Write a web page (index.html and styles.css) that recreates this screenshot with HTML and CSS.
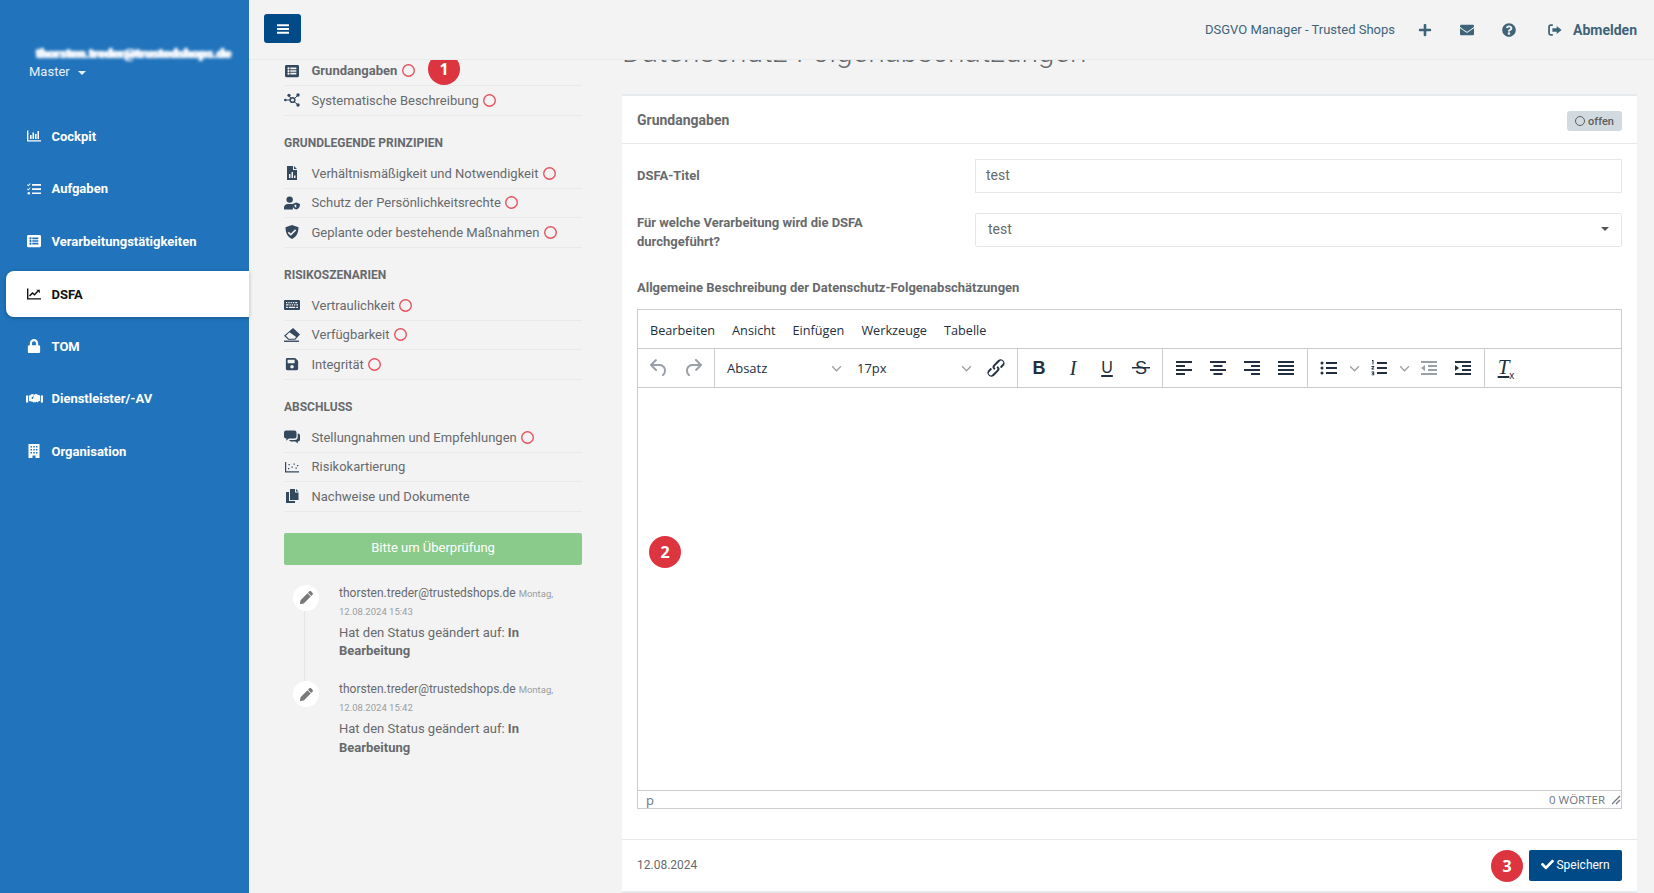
FILE: index.html
```html
<!DOCTYPE html>
<html lang="de">
<head>
  <meta charset="UTF-8" />
  <meta name="viewport" content="width=device-width,initial-scale=1.0" />
  <title>DSFA - Grundangaben</title>
  <link rel="stylesheet" href="styles.css">
</head>
<body>
  <svg class="sprite" aria-hidden="true">
    <symbol id="i-bars" viewBox="0 0 14 14"><path d="M1 2.2h12v2H1zM1 6h12v2H1zM1 9.8h12v2H1z"/></symbol>
    <symbol id="i-chartbar" viewBox="0 0 14 14"><path d="M0 1.5h1.4v9.700H14v1.400H0zM3 6h1.600v4H3zM5.500 3.500h1.600V10H5.500zM8 5h1.600v5H8zM10.500 2H12v8h-1.500z"/></symbol>
    <symbol id="i-tasks" viewBox="0 0 14 14"><path d="M5 2h9v1.700H5zM5 6.200h9v1.700H5zM5 10.400h9v1.700H5zM.5 2.200l.8.800L3 1.200l.7.700L1.300 4.300 0 3zM.5 6.400l.8.800L3 5.400l.7.700-2.400 2.400L0 7.200z"/><circle cx="1.800" cy="11.300" r="1.300"/></symbol>
    <symbol id="i-list" viewBox="0 0 512 512"><path d="M464 480H48c-26.510 0-48-21.490-48-48V80c0-26.510 21.490-48 48-48h416c26.510 0 48 21.490 48 48v352c0 26.510-21.490 48-48 48zM128 120c-22.091 0-40 17.909-40 40s17.909 40 40 40 40-17.909 40-40-17.909-40-40-40zm0 96c-22.091 0-40 17.909-40 40s17.909 40 40 40 40-17.909 40-40-17.909-40-40-40zm0 96c-22.091 0-40 17.909-40 40s17.909 40 40 40 40-17.909 40-40-17.909-40-40-40zm288-136v-32c0-6.627-5.373-12-12-12H204c-6.627 0-12 5.373-12 12v32c0 6.627 5.373 12 12 12h200c6.627 0 12-5.373 12-12zm0 96v-32c0-6.627-5.373-12-12-12H204c-6.627 0-12 5.373-12 12v32c0 6.627 5.373 12 12 12h200c6.627 0 12-5.373 12-12zm0 96v-32c0-6.627-5.373-12-12-12H204c-6.627 0-12 5.373-12 12v32c0 6.627 5.373 12 12 12h200c6.627 0 12-5.373 12-12z"/></symbol>
    <symbol id="i-chartline" viewBox="0 0 14 14"><path d="M0 1.500h1.400v9.700H14v1.400H0z"/><path d="M2.500 9l3-3 2 1.800 3.300-3.500" fill="none" stroke="currentColor" stroke-width="1.500"/><path d="M9.300 2.800h3.500v3.500z"/></symbol>
    <symbol id="i-lock" viewBox="0 0 448 512"><path d="M400 224h-24v-72C376 68.200 307.800 0 224 0S72 68.200 72 152v72H48c-26.500 0-48 21.500-48 48v192c0 26.500 21.500 48 48 48h352c26.500 0 48-21.500 48-48V272c0-26.500-21.500-48-48-48zm-104 0H152v-72c0-39.700 32.300-72 72-72s72 32.300 72 72v72z"/></symbol>
    <symbol id="i-hands" viewBox="0 0 17 14"><path d="M0 3.500h2.200v7H0zM14.800 3.500H17v7h-2.200zM3 3.700l3-1.700 2.500.8-2.900 2.900c-.5.700.5 1.700 1.300 1.100l1.600-1.300 4 3.700-1.200 1.300-1-.9-.5 1-1-.8-.8 1-1.300-1L3 9zM8.300 2.500L10 2l4 1.500v5.300l-1.700.6-4.100-3.800-1.300 1z"/></symbol>
    <symbol id="i-building" viewBox="0 0 12 14"><path fill-rule="evenodd" d="M.5 0h11v14H7.500v-2.500h-3V14h-4zM2.500 2v1.500H4V2zm2.800 0v1.500h1.500V2zM8 2v1.500h1.500V2zM2.500 5v1.500H4V5zm2.800 0v1.500h1.500V5zM8 5v1.500h1.500V5zM2.500 8v1.500H4V8zm2.800 0v1.500h1.500V8zM8 8v1.500h1.500V8z"/></symbol>
    <symbol id="i-nodes" viewBox="0 0 16 14"><path d="M1.500 7h5M5 3l2.500 3M10 6l3.500-3.500M10 8.500l3.500 3" fill="none" stroke="currentColor" stroke-width="1"/><circle cx="1.300" cy="7" r="1.300"/><circle cx="5" cy="2.300" r="1.600"/><circle cx="14" cy="2" r="1.700"/><circle cx="14" cy="12" r="1.700"/><circle cx="8.500" cy="7" r="2.300" fill="none" stroke="currentColor" stroke-width="1.600"/></symbol>
    <symbol id="i-filechart" viewBox="0 0 12 14"><path fill-rule="evenodd" d="M1 0h6v4h4v10H1zM8 0l3 3H8zM3 8v4h1.500V8zm2.500-2v6H7V6zM8 9.500V12h1.500V9.500z"/></symbol>
    <symbol id="i-usershield" viewBox="0 0 17 14"><circle cx="6" cy="3.400" r="3.400"/><path d="M0 14v-2.200C0 9.500 2 8 4 8h4c.6 0 1 .1 1.500.3V14z"/><path fill-rule="evenodd" d="M13 6.500l4 1.500c0 3-1 5-4 6-3-1-4-3-4-6zm0 2l-2 .7c.1 1.500.7 2.400 2 3z"/></symbol>
    <symbol id="i-shield" viewBox="0 0 14 14"><path fill-rule="evenodd" d="M7 0l6.500 2.300c0 5.500-1.900 9.700-6.500 11.700C2.400 12 .5 7.800.5 2.300zM3.800 6.800L2.800 7.900l3 2.800 5.400-5.300-1.100-1.100-4.300 4.200z"/></symbol>
    <symbol id="i-keyboard" viewBox="0 0 16 12"><path fill-rule="evenodd" d="M1 1h14a1 1 0 0 1 1 1v8a1 1 0 0 1-1 1H1a1 1 0 0 1-1-1V2a1 1 0 0 1 1-1zm1 2v1.300h1.300V3zm2.300 0v1.300h1.300V3zm2.300 0v1.300h1.300V3zm2.300 0v1.300h1.300V3zm2.300 0v1.300h2V3zM2 5.300v1.300h2.500V5.300zm3.500 0v1.300h1.300V5.300zm2.300 0v1.300h1.300V5.300zm2.300 0v1.300h1.300V5.300zm2.300 0v1.300H14V5.300zM2 7.700V9h1.800V7.700zm2.800 0V9h6.400V7.700zm7.400 0V9H14V7.700z"/></symbol>
    <symbol id="i-eraser" viewBox="0 0 15 13"><path fill-rule="evenodd" d="M8.500 0l6.500 6-4.500 5H4L0 7.300zM5.200 4L1.700 7.300 4.600 10h5.300l1.500-1.600z"/><path d="M0 11.700h14V13H0z"/></symbol>
    <symbol id="i-save" viewBox="0 0 448 512"><path d="M433.941 129.941l-83.882-83.882A48 48 0 0 0 316.118 32H48C21.490 32 0 53.490 0 80v352c0 26.510 21.490 48 48 48h352c26.510 0 48-21.490 48-48V163.882a48 48 0 0 0-14.059-33.941zM224 416c-35.346 0-64-28.654-64-64 0-35.346 28.654-64 64-64s64 28.654 64 64c0 35.346-28.654 64-64 64zm96-304.520V212c0 6.627-5.373 12-12 12H76c-6.627 0-12-5.373-12-12V108c0-6.627 5.373-12 12-12h228.520c3.183 0 6.235 1.264 8.485 3.515l3.480 3.480A11.996 11.996 0 0 1 320 111.480z"/></symbol>
    <symbol id="i-comments" viewBox="0 0 16 14"><path d="M2 .5h8.500a2 2 0 0 1 2 2v4a2 2 0 0 1-2 2H5l-3 2.300.6-2.300H2a2 2 0 0 1-2-2v-4a2 2 0 0 1 2-2z"/><path d="M13.700 3.500H14a2 2 0 0 1 2 2v4a2 2 0 0 1-2 2h-.4l.6 2-3-2H7a2 2 0 0 1-1.800-1.500h5.300a3.200 3.200 0 0 0 3.200-3.200z"/></symbol>
    <symbol id="i-scatter" viewBox="0 0 14 14"><path d="M0 2h1.200v9.300H14v1.200H0z"/><path d="M3 8h1.300v1.300H3zM3.500 4h1.300v1.300H3.500zM6.500 6.500h1.300v1.300H6.500zM8.500 3.500h1.300v1.300H8.500zM10.500 7.500h1.300v1.300h-1.300zM12 5h1.300v1.300H12z"/></symbol>
    <symbol id="i-copy" viewBox="0 0 14 14"><path d="M5 0h5v3.500h3.500V11H5z"/><path d="M11 0l2.500 2.500H11zM1 3h3v9h6v2H1z"/></symbol>
    <symbol id="i-pencil" viewBox="0 0 512 512"><path d="M497.900 142.100l-46.100 46.100c-4.700 4.700-12.300 4.700-17 0l-111-111c-4.700-4.700-4.700-12.300 0-17l46.100-46.100c18.700-18.700 49.100-18.700 67.900 0l60.100 60.100c18.800 18.700 18.800 49.100 0 67.900zM284.200 99.800L21.600 362.400.4 483.900c-2.900 16.400 11.400 30.600 27.800 27.800l121.500-21.300 262.600-262.600c4.700-4.700 4.700-12.300 0-17l-111-111c-4.800-4.700-12.400-4.700-17.100 0z"/></symbol>
    <symbol id="i-check" viewBox="0 0 512 512"><path d="M173.898 439.404l-166.400-166.400c-9.997-9.997-9.997-26.206 0-36.204l36.203-36.204c9.997-9.998 26.207-9.998 36.204 0L192 312.690 432.095 72.596c9.997-9.997 26.207-9.997 36.204 0l36.203 36.204c9.997 9.997 9.997 26.206 0 36.204l-294.400 294.401c-9.998 9.997-26.207 9.997-36.204-.001z"/></symbol>
    <symbol id="i-plus" viewBox="0 0 448 512"><path d="M416 208H272V64c0-17.670-14.330-32-32-32h-32c-17.670 0-32 14.330-32 32v144H32c-17.670 0-32 14.330-32 32v32c0 17.670 14.330 32 32 32h144v144c0 17.670 14.330 32 32 32h32c17.670 0 32-14.330 32-32V304h144c17.670 0 32-14.330 32-32v-32c0-17.670-14.330-32-32-32z"/></symbol>
    <symbol id="i-envelope" viewBox="0 0 512 512"><path d="M502.300 190.800c3.900-3.100 9.700-.2 9.700 4.700V400c0 26.500-21.500 48-48 48H48c-26.500 0-48-21.500-48-48V195.600c0-5 5.700-7.800 9.700-4.700 22.400 17.400 52.100 39.500 154.100 113.600 21.100 15.400 56.700 47.800 92.200 47.600 35.700.3 72-32.800 92.300-47.600 102-74.100 131.600-96.300 154-113.700zM256 320c23.200.4 56.600-29.200 73.400-41.400 132.700-96.300 142.800-104.700 173.400-128.700 5.800-4.500 9.200-11.500 9.200-18.900v-19c0-26.500-21.500-48-48-48H48C21.500 64 0 85.500 0 112v19c0 7.400 3.400 14.300 9.200 18.900 30.600 23.900 40.700 32.400 173.400 128.700 16.800 12.200 50.200 41.800 73.400 41.400z"/></symbol>
    <symbol id="i-question" viewBox="0 0 512 512"><path d="M504 256c0 136.997-111.043 248-248 248S8 392.997 8 256C8 119.083 119.043 8 256 8s248 111.083 248 248zM262.655 90c-54.497 0-89.255 22.957-116.549 63.758-3.536 5.286-2.353 12.415 2.715 16.258l34.699 26.310c5.205 3.947 12.621 3.008 16.665-2.122 17.864-22.658 30.113-35.797 57.303-35.797 20.429 0 45.698 13.148 45.698 32.958 0 14.976-12.363 22.667-32.534 33.976C247.128 238.528 216 254.941 216 296v4c0 6.627 5.373 12 12 12h56c6.627 0 12-5.373 12-12v-1.333c0-28.462 83.186-29.647 83.186-106.667 0-58.002-60.165-102-116.531-102zM256 338c-25.365 0-46 20.635-46 46 0 25.364 20.635 46 46 46s46-20.636 46-46c0-25.365-20.635-46-46-46z"/></symbol>
    <symbol id="i-signout" viewBox="0 0 16 14"><path d="M5.500 1.500H3A1.800 1.800 0 0 0 1.200 3.300v7.400A1.800 1.800 0 0 0 3 12.500h2.500" fill="none" stroke="currentColor" stroke-width="2"/><path d="M10 2.300L15.500 7 10 11.700V9H5V5h5z"/></symbol>

    <symbol id="m-undo" viewBox="0 0 24 24"><path d="M6.400 8H12c3.700 0 6.200 2 6.800 5.100.6 2.700-.4 5.600-2.300 6.800a1 1 0 0 1-1-1.800c1.100-.6 1.800-2.700 1.400-4.600-.5-2.100-2.100-3.500-4.900-3.500H6.400l3.300 3.300a1 1 0 1 1-1.400 1.400l-5-5a1 1 0 0 1 0-1.400l5-5a1 1 0 0 1 1.400 1.400L6.400 8z"/></symbol>
    <symbol id="m-redo" viewBox="0 0 24 24"><path d="M17.600 10H12c-2.800 0-4.400 1.400-4.900 3.500-.4 2 .3 4 1.400 4.600a1 1 0 1 1-1 1.800c-2-1.200-2.900-4.100-2.300-6.800.6-3 3-5.100 6.800-5.100h5.600l-3.300-3.300a1 1 0 1 1 1.400-1.400l5 5a1 1 0 0 1 0 1.400l-5 5a1 1 0 0 1-1.400-1.400l3.300-3.300z"/></symbol>
    <symbol id="m-chevron" viewBox="0 0 10 10"><path d="M1 3l4 4 4-4" fill="none" stroke="currentColor" stroke-width="1.200"/></symbol>
    <symbol id="m-link" viewBox="0 0 24 24"><path d="M6.200 12.300a1 1 0 0 1 1.400 1.400l-2 2a2 2 0 1 0 2.800 2.800l4.800-4.800a1 1 0 0 0 0-1.400 1 1 0 1 1 1.400-1.300 2.900 2.900 0 0 1 0 4L9.800 20a4 4 0 0 1-5.600-5.500l2-2.200zm11.600-.6a1 1 0 0 1-1.400-1.400l2-2a2 2 0 1 0-2.800-2.800l-4.800 4.800a1 1 0 0 0 0 1.400 1 1 0 1 1-1.400 1.300 2.900 2.900 0 0 1 0-4L14.200 4a4 4 0 0 1 5.600 5.500l-2 2.200z"/></symbol>
    <symbol id="m-left" viewBox="0 0 24 24"><path d="M4 5h16v2H4zM4 9h9v2H4zM4 13h16v2H4zM4 17h9v2H4z"/></symbol>
    <symbol id="m-center" viewBox="0 0 24 24"><path d="M4 5h16v2H4zM7.500 9h9v2h-9zM4 13h16v2H4zM7.500 17h9v2h-9z"/></symbol>
    <symbol id="m-right" viewBox="0 0 24 24"><path d="M4 5h16v2H4zM11 9h9v2h-9zM4 13h16v2H4zM11 17h9v2h-9z"/></symbol>
    <symbol id="m-justify" viewBox="0 0 24 24"><path d="M4 5h16v2H4zM4 9h16v2H4zM4 13h16v2H4zM4 17h16v2H4z"/></symbol>
    <symbol id="m-bullets" viewBox="0 0 24 24"><path d="M9 6h11v2H9zM9 11h11v2H9zM9 16h11v2H9z"/><circle cx="5" cy="7" r="1.500"/><circle cx="5" cy="12" r="1.500"/><circle cx="5" cy="17" r="1.500"/></symbol>
    <symbol id="m-numbers" viewBox="0 0 24 24"><path d="M10 6h10v2H10zM10 11h10v2H10zM10 16h10v2H10zM5 4h1.500v4.500h-1v-3.300H5zM4.500 10h2.700v1.100l-1.500 1.500h1.500v1H4.500v-1l1.600-1.600H4.500zM4.500 15.500h2.700v3.800H4.500v-.9h1.700v-.6H5v-.8h1.200v-.6H4.500z"/></symbol>
    <symbol id="m-outdent" viewBox="0 0 24 24"><path d="M4 5h16v2H4zM11 9h9v2h-9zM11 13h9v2h-9zM4 17h16v2H4zM8 9v6l-4-3z"/></symbol>
    <symbol id="m-indent" viewBox="0 0 24 24"><path d="M4 5h16v2H4zM11 9h9v2h-9zM11 13h9v2h-9zM4 17h16v2H4zM4 9v6l4-3z"/></symbol>
    <symbol id="m-grip" viewBox="0 0 10 10"><path d="M9 1L1 9M9 5L5 9" fill="none" stroke="currentColor" stroke-width="1.200"/></symbol>
  </svg>

  <div class="app">
    <aside class="sidebar">
      <div class="profile">
        <div class="profile-mail">thorsten.treder@trustedshops.de</div>
        <div class="profile-role">Master <span class="caret"></span></div>
      </div>
      <nav class="side-nav">
        <a href="#" class="side-link"><svg class="ic"><use href="#i-chartbar"/></svg>Cockpit</a>
        <a href="#" class="side-link"><svg class="ic"><use href="#i-tasks"/></svg>Aufgaben</a>
        <a href="#" class="side-link"><svg class="ic"><use href="#i-list"/></svg>Verarbeitungstätigkeiten</a>
        <a href="#" class="side-link active"><svg class="ic"><use href="#i-chartline"/></svg>DSFA</a>
        <a href="#" class="side-link"><svg class="ic"><use href="#i-lock"/></svg>TOM</a>
        <a href="#" class="side-link"><svg class="ic ic-wide"><use href="#i-hands"/></svg>Dienstleister/-AV</a>
        <a href="#" class="side-link"><svg class="ic"><use href="#i-building"/></svg>Organisation</a>
      </nav>
    </aside>

    <div class="main">
      <header class="topbar">
        <button class="menu-btn"><svg class="ic"><use href="#i-bars"/></svg></button>
        <div class="top-links">
          <span class="top-name">DSGVO Manager - Trusted Shops</span>
          <svg class="top-ic"><use href="#i-plus"/></svg>
          <svg class="top-ic"><use href="#i-envelope"/></svg>
          <svg class="top-ic"><use href="#i-question"/></svg>
          <span class="top-logout"><svg class="top-ic"><use href="#i-signout"/></svg>Abmelden</span>
        </div>
      </header>

      <div class="page">
        <section class="steps">
          <ul class="step-list">
            <li class="step current"><svg class="ic"><use href="#i-list"/></svg>Grundangaben<span class="ring"></span></li>
            <li class="step"><svg class="ic"><use href="#i-nodes"/></svg>Systematische Beschreibung<span class="ring"></span></li>
          </ul>
          <h6 class="step-head">Grundlegende Prinzipien</h6>
          <ul class="step-list">
            <li class="step"><svg class="ic"><use href="#i-filechart"/></svg>Verhältnismäßigkeit und Notwendigkeit<span class="ring"></span></li>
            <li class="step"><svg class="ic"><use href="#i-usershield"/></svg>Schutz der Persönlichkeitsrechte<span class="ring"></span></li>
            <li class="step"><svg class="ic"><use href="#i-shield"/></svg>Geplante oder bestehende Maßnahmen<span class="ring"></span></li>
          </ul>
          <h6 class="step-head">Risikoszenarien</h6>
          <ul class="step-list">
            <li class="step"><svg class="ic"><use href="#i-keyboard"/></svg>Vertraulichkeit<span class="ring"></span></li>
            <li class="step"><svg class="ic"><use href="#i-eraser"/></svg>Verfügbarkeit<span class="ring"></span></li>
            <li class="step"><svg class="ic"><use href="#i-save"/></svg>Integrität<span class="ring"></span></li>
          </ul>
          <h6 class="step-head">Abschluss</h6>
          <ul class="step-list">
            <li class="step"><svg class="ic"><use href="#i-comments"/></svg>Stellungnahmen und Empfehlungen<span class="ring"></span></li>
            <li class="step"><svg class="ic"><use href="#i-scatter"/></svg>Risikokartierung</li>
            <li class="step"><svg class="ic"><use href="#i-copy"/></svg>Nachweise und Dokumente</li>
          </ul>
          <button class="review-btn">Bitte um Überprüfung</button>
          <div class="timeline">
            <div class="event">
              <span class="event-dot"><svg class="ic"><use href="#i-pencil"/></svg></span>
              <div class="event-body">
                <div class="event-who">thorsten.treder@trustedshops.de <small>Montag,</small> <small>12.08.2024 15:43</small></div>
                <p>Hat den Status geändert auf: <b>In</b> <b>Bearbeitung</b></p>
              </div>
            </div>
            <div class="event">
              <span class="event-dot"><svg class="ic"><use href="#i-pencil"/></svg></span>
              <div class="event-body">
                <div class="event-who">thorsten.treder@trustedshops.de <small>Montag,</small> <small>12.08.2024 15:42</small></div>
                <p>Hat den Status geändert auf: <b>In</b> <b>Bearbeitung</b></p>
              </div>
            </div>
          </div>
        </section>

        <section class="content">
          <h1 class="page-title">Datenschutz-Folgenabschätzungen</h1>
          <div class="card">
            <div class="card-head">
              <span>Grundangaben</span>
              <span class="badge"><span class="badge-ring"></span>offen</span>
            </div>
            <div class="card-body">
              <div class="field">
                <label class="label-single">DSFA-Titel</label>
                <div class="input">test</div>
              </div>
              <div class="field">
                <label>Für welche Verarbeitung wird die DSFA durchgeführt?</label>
                <div class="input select">test<span class="caret"></span></div>
              </div>
              <div class="editor-label">Allgemeine Beschreibung der Datenschutz-Folgenabschätzungen</div>
              <div class="editor">
                <div class="menubar">
                  <span>Bearbeiten</span><span>Ansicht</span><span>Einfügen</span><span>Werkzeuge</span><span>Tabelle</span>
                </div>
                <div class="toolbar">
                  <div class="tool-group">
                    <span class="tool off"><svg><use href="#m-undo"/></svg></span>
                    <span class="tool off"><svg><use href="#m-redo"/></svg></span>
                  </div>
                  <div class="tool-group">
                    <span class="tool-select">Absatz<svg><use href="#m-chevron"/></svg></span>
                    <span class="tool-select">17px<svg><use href="#m-chevron"/></svg></span>
                    <span class="tool"><svg><use href="#m-link"/></svg></span>
                  </div>
                  <div class="tool-group">
                    <span class="tool tx-b">B</span>
                    <span class="tool tx-i">I</span>
                    <span class="tool tx-u">U</span>
                    <span class="tool tx-s"><span>S</span></span>
                  </div>
                  <div class="tool-group">
                    <span class="tool"><svg><use href="#m-left"/></svg></span>
                    <span class="tool"><svg><use href="#m-center"/></svg></span>
                    <span class="tool"><svg><use href="#m-right"/></svg></span>
                    <span class="tool"><svg><use href="#m-justify"/></svg></span>
                  </div>
                  <div class="tool-group">
                    <span class="tool"><svg><use href="#m-bullets"/></svg></span>
                    <span class="tool-split"><svg><use href="#m-chevron"/></svg></span>
                    <span class="tool"><svg><use href="#m-numbers"/></svg></span>
                    <span class="tool-split"><svg><use href="#m-chevron"/></svg></span>
                    <span class="tool off"><svg><use href="#m-outdent"/></svg></span>
                    <span class="tool"><svg><use href="#m-indent"/></svg></span>
                  </div>
                  <div class="tool-group last">
                    <span class="tool tx-clear"><span><i>T</i><sub>x</sub></span></span>
                  </div>
                </div>
                <div class="editor-area"></div>
                <div class="statusbar">
                  <span class="status-path">p</span>
                  <span class="status-right">0 WÖRTER<svg><use href="#m-grip"/></svg></span>
                </div>
              </div>
            </div>
            <div class="card-foot">
              <span>12.08.2024</span>
              <button class="save-btn"><svg class="ic"><use href="#i-check"/></svg>Speichern</button>
            </div>
          </div>
        </section>
      </div>
    </div>
  </div>

  <span class="marker marker-1">1</span>
  <span class="marker marker-2">2</span>
  <span class="marker marker-3">3</span>
</body>
</html>
```

FILE: styles.css
```css
* {
  box-sizing: border-box;
}

body {
  margin: 0;
  height: 100vh;
  overflow: hidden;
  background: #f3f3f4;
  font-family: Roboto, "Liberation Sans", sans-serif;
  font-size: 13px;
  color: #676a6c;
}

.sprite {
  display: none;
}

.ic {
  width: 14px;
  height: 14px;
  fill: currentColor;
  flex: none;
}

.app {
  display: flex;
  height: 100%;
}

/* sidebar */
.sidebar {
  width: 249px;
  flex: none;
  background: #2174bc;
  color: #fff;
}

.profile {
  height: 113px;
  padding: 47px 0 0 29px;
}

.profile-mail {
  margin-left: 7px;
  font-size: 13px;
  font-weight: 700;
  line-height: 14px;
  white-space: nowrap;
  filter: blur(1.4px);
  text-shadow: 1px 0 #fff, -1px 0 #dfe6ff;
}

.profile-role {
  margin-top: 3px;
  font-size: 13px;
  line-height: 16px;
  color: #e6eff7;
}

.caret {
  display: inline-block;
  width: 0;
  height: 0;
  margin-left: 5px;
  vertical-align: middle;
  border-top: 4px solid currentColor;
  border-left: 4px solid transparent;
  border-right: 4px solid transparent;
}

.side-nav {
  display: flex;
  flex-direction: column;
  gap: 6.5px;
  padding-left: 6px;
}

.side-link {
  display: flex;
  align-items: center;
  gap: 10.500px;
  height: 46px;
  padding-left: 21px;
  color: #fff;
  font-size: 13px;
  font-weight: 700;
  text-decoration: none;
}

.side-link .ic-wide {
  width: 17px;
  margin: 0 -1.500px;
}

.side-link.active {
  padding-top: 1px;
  background: #fff;
  color: #111;
  border-radius: 8px 0 0 8px;
  box-shadow: 0 1px 4px rgba(0, 0, 0, .25);
}

/* top bar */
.main {
  flex: 1;
  min-width: 0;
  display: flex;
  flex-direction: column;
}

.topbar {
  position: relative;
  z-index: 2;
  flex: none;
  height: 60px;
  display: flex;
  align-items: center;
  justify-content: space-between;
  padding: 0 17px 0 15px;
  background: #f3f3f4;
  border-bottom: 1px solid #e7eaec;
  color: #3e6479;
}

.menu-btn {
  width: 37px;
  height: 29px;
  margin-bottom: 2px;
  display: flex;
  align-items: center;
  justify-content: center;
  padding: 0;
  border: 0;
  border-radius: 3px;
  background: #004b87;
  color: #fff;
}

.top-links {
  display: flex;
  align-items: center;
  gap: 28px;
  font-size: 13px;
}

.top-name {
  margin-right: -5px;
}

.top-ic {
  width: 14px;
  height: 14px;
  fill: currentColor;
}

.top-logout {
  display: flex;
  align-items: center;
  gap: 11px;
  margin-left: 4px;
  font-size: 14px;
  font-weight: 700;
}

/* steps column */
.page {
  flex: 1;
  min-height: 0;
  display: flex;
}

.steps {
  width: 373px;
  flex: none;
  padding: 0 40px 0 35px;
  margin-top: -3.500px;
}

.step-list {
  list-style: none;
  margin: 0;
  padding: 0;
}

.step {
  display: flex;
  align-items: center;
  height: 29.5px;
  border-bottom: 1px solid #e7eaec;
  white-space: nowrap;
  font-size: 13px;
}

.step .ic {
  width: 16px;
  margin-right: 11.500px;
  color: #34495e;
}

.step.current {
  font-weight: 700;
}

.ring {
  width: 13px;
  height: 13px;
  margin-left: 4.500px;
  border-radius: 50%;
  box-shadow: inset 0 0 0 1.400px #e5535d;
}

.step-head {
  margin: 0;
  height: 43.500px;
  padding-top: 19px;
  font-size: 12px;
  line-height: 16px;
  font-weight: 700;
  text-transform: uppercase;
}

.review-btn {
  display: block;
  width: 100%;
  height: 32px;
  margin-top: 21px;
  padding: 0 0 2px;
  border: 0;
  border-radius: 2px;
  background: #8aca8a;
  color: #fff;
  font: 400 13px Roboto, sans-serif;
}

.timeline {
  margin-top: 20px;
  padding-left: 9px;
}

.event {
  position: relative;
  display: flex;
  gap: 20px;
  height: 96.500px;
}

.event:first-child::before {
  content: "";
  position: absolute;
  left: 11px;
  top: 26px;
  bottom: 0;
  width: 1px;
  background: #e3e5e7;
}

.event-dot {
  width: 26px;
  height: 26px;
  flex: none;
  display: flex;
  align-items: center;
  justify-content: center;
  border-radius: 50%;
  background: #fff;
  color: #77797b;
}

.event-dot .ic {
  width: 13px;
  height: 13px;
}

.event-body {
  width: 222px;
  margin-top: -1px;
}

.event-who {
  line-height: 18px;
  font-size: 12px;
}

.event-who small {
  font-size: 9.500px;
  line-height: 1;
  color: #9a9d9f;
}

.event-body p {
  margin: 4px 0 0;
  line-height: 18.500px;
  font-size: 13px;
}

/* content */
.content {
  flex: 1;
  min-width: 0;
  display: flex;
  flex-direction: column;
  padding-right: 17px;
}

.page-title {
  flex: none;
  height: 49px;
  margin: -15px 0 0;
  font-size: 30px;
  font-weight: 300;
  line-height: 14px;
  white-space: nowrap;
}

.card {
  flex: 1;
  display: flex;
  flex-direction: column;
  background: #fff;
  border-top: 2px solid #e7eaec;
  border-bottom: 2px solid #e7eaec;
}

.card-head {
  flex: none;
  height: 48px;
  display: flex;
  align-items: center;
  justify-content: space-between;
  padding: 0 15px;
  border-bottom: 1px solid #e7eaec;
  font-size: 14px;
  font-weight: 700;
}

.badge {
  display: flex;
  align-items: center;
  gap: 3px;
  height: 20px;
  margin-top: 3px;
  padding: 0 8px;
  border-radius: 3px;
  background: #d1dade;
  font-size: 11px;
  font-weight: 500;
  color: #5e5e5e;
}

.badge-ring {
  width: 10px;
  height: 10px;
  border: 1px solid #5e5e5e;
  border-radius: 50%;
}

.card-body {
  flex: 1;
  padding: 15px 15px 0;
}

.field {
  display: flex;
  align-items: flex-start;
  margin-bottom: 20px;
}

.field label {
  width: 338px;
  flex: none;
  padding-right: 90px;
  font-size: 13px;
  font-weight: 700;
  line-height: 19px;
}

.field .label-single {
  padding-top: 7px;
}

.input {
  flex: 1;
  display: flex;
  align-items: center;
  justify-content: space-between;
  height: 34px;
  padding: 0 10px 2px;
  border: 1px solid #e5e6e7;
  font-size: 14px;
}

.select {
  padding: 0 12px 2px;
  border-radius: 2px;
}

.select .caret {
  color: #555;
}

.editor-label {
  margin-top: 29px;
  font-size: 13px;
  font-weight: 700;
  line-height: 16px;
}

/* editor */
.editor {
  display: flex;
  flex-direction: column;
  height: 500px;
  margin-top: 13px;
  border: 1px solid #ccc;
  font-family: "Open Sans", sans-serif;
  color: #222f3e;
}

.menubar {
  flex: none;
  display: flex;
  gap: 17px;
  align-items: center;
  height: 39px;
  padding: 1px 12px 0;
  border-bottom: 1px solid #ccc;
  font-size: 12.700px;
}

.toolbar {
  flex: none;
  display: flex;
  height: 39px;
  border-bottom: 1px solid #ccc;
}

.tool-group {
  display: flex;
  align-items: center;
  padding: 0 4px;
  border-right: 1px solid #ccc;
}

.tool-group.last {
  border-right: 0;
}

.tool {
  width: 34px;
  height: 34px;
  display: flex;
  align-items: center;
  justify-content: center;
}

.tool svg {
  width: 24px;
  height: 24px;
  fill: currentColor;
}

.tool.off {
  color: #9aa0a7;
}

.tool-select {
  width: 126px;
  height: 34px;
  margin-right: 4px;
  padding: 0 3px 0 8px;
  display: flex;
  align-items: center;
  justify-content: space-between;
  font-size: 13px;
}

.tool-select svg,
.tool-split svg {
  width: 11px;
  height: 11px;
  color: #9aa0a7;
}

.tool-split {
  width: 16px;
  display: flex;
  justify-content: center;
}

.tx-b {
  font: 700 18px "Liberation Sans", sans-serif;
}

.tx-i {
  font: italic 400 20px "Liberation Serif", serif;
}

.tx-u {
  font: 400 16px "Liberation Sans", sans-serif;
  text-decoration: underline;
  text-decoration-thickness: 2px;
  text-underline-offset: 2px;
}

.tx-s {
  font: 400 18px "Liberation Sans", sans-serif;
}

.tx-s span {
  padding: 0 3px;
  background: linear-gradient(#222f3e, #222f3e) center / 100% 1.500px no-repeat;
}

.tx-clear {
  font: italic 400 21px "Liberation Serif", serif;
}

.tx-clear i {
  text-decoration: underline;
  text-decoration-thickness: 1.500px;
  text-underline-offset: 2px;
}

.tx-clear sub {
  font: 400 10px "Liberation Sans", sans-serif;
}

.editor-area {
  flex: 1;
}

.statusbar {
  flex: none;
  height: 18px;
  display: flex;
  align-items: center;
  justify-content: space-between;
  padding: 0 0 0 8px;
  border-top: 1px solid #ccc;
  font-size: 11.500px;
  color: #6d7680;
}

.status-path {
  font-size: 13px;
  line-height: 14px;
}

.status-right {
  display: flex;
  align-items: center;
  gap: 6px;
}

.status-right svg {
  width: 10px;
  height: 10px;
}

.card-foot {
  flex: none;
  height: 52px;
  margin-top: 30px;
  display: flex;
  align-items: center;
  justify-content: space-between;
  padding: 0 15px;
  border-top: 1px solid #e7eaec;
  font-size: 12px;
}

.card-foot > span {
  padding-bottom: 2px;
}

.save-btn {
  display: flex;
  align-items: center;
  justify-content: center;
  gap: 2px;
  width: 93px;
  height: 31px;
  padding: 0 0 2px;
  border: 0;
  border-radius: 2px;
  background: #004b87;
  color: #fff;
  font: 400 12px Roboto, sans-serif;
}

.save-btn .ic {
  width: 13px;
  height: 13px;
}

/* numbered marks laid over the screenshot */
.marker {
  position: absolute;
  width: 32px;
  height: 32px;
  display: flex;
  align-items: center;
  justify-content: center;
  border-radius: 50%;
  background: #dc3540;
  color: #fff;
  font: 700 16px "Open Sans", sans-serif;
}

.marker-1 {
  left: 428px;
  top: 53px;
}

.marker-2 {
  left: 649px;
  top: 536px;
}

.marker-3 {
  left: 1491px;
  top: 850px;
}
```
